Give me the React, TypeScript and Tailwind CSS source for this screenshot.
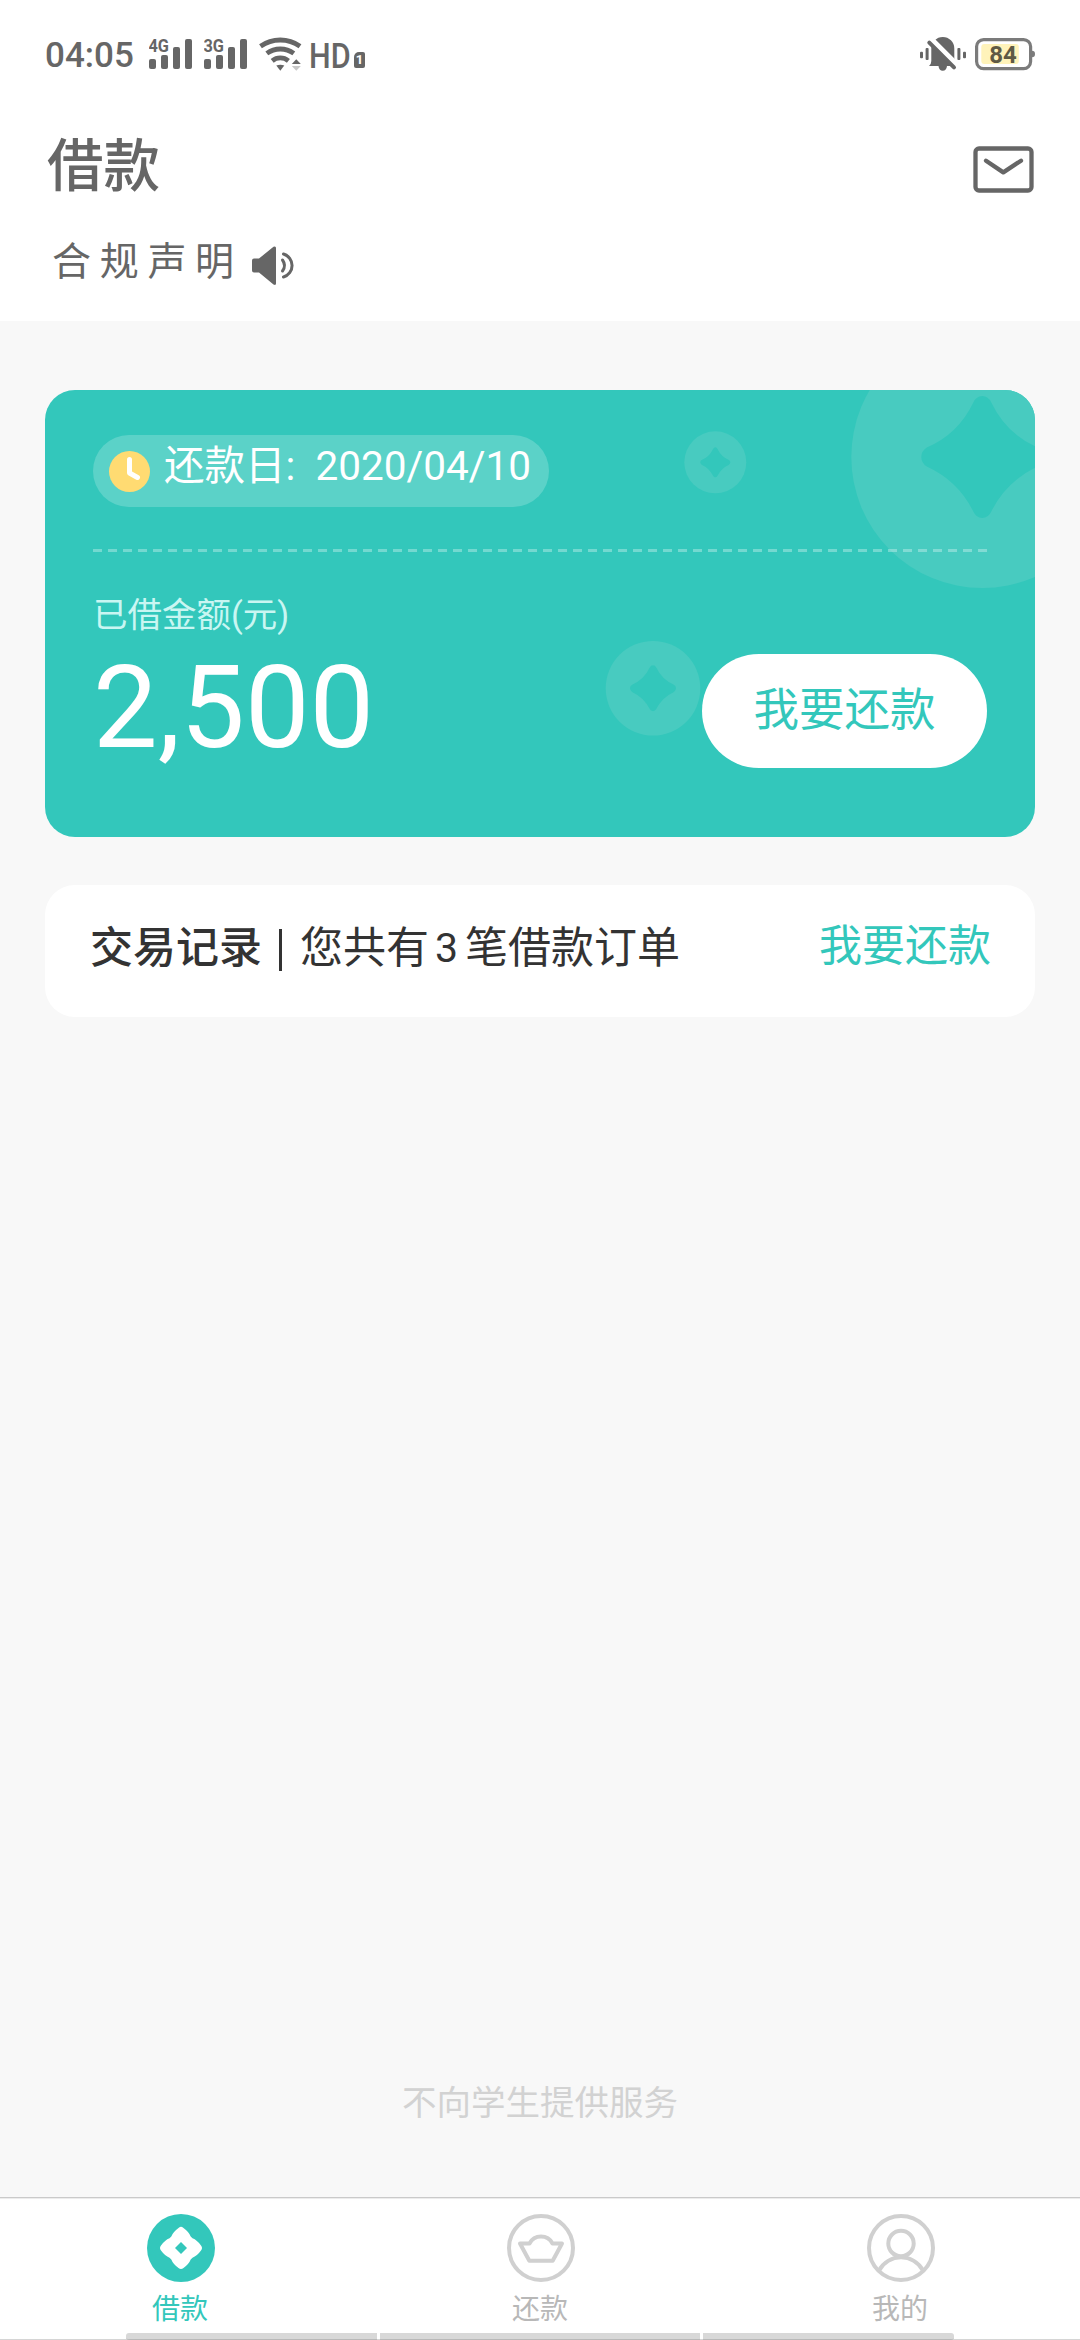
import type { ReactNode } from "react";

const STAR =
  "M0 -61 Q-6 -61 -9 -54.5 Q-24 -23 -55.5 -9.5 Q-61 -6 -61 0 Q-61 6 -55.5 9.5 Q-24 24 -9 54.5 Q-6 61 0 61 Q6 61 9 54.5 Q24 24 55.5 9.5 Q61 6 61 0 Q61 -6 55.5 -9.5 Q24 -23 9 -54.5 Q6 -61 0 -61 Z";

const coins = [
  { x: 937.3, y: 67, r: 131, star: 1 },
  { x: 670.3, y: 72.3, r: 31, star: 0.246 },
  { x: 608, y: 298.3, r: 47.3, star: 0.377 },
];

function Signal({ label }: { label: string }) {
  return (
    <svg width="43" height="40" viewBox="0 0 43 40" fill="#666">
      <text x="-0.5" y="15.5" fontSize="17.5" fontWeight="700" textLength="20.5" lengthAdjust="spacingAndGlyphs">
        {label}
      </text>
      <rect x="0" y="23" width="7" height="10" rx="2" />
      <rect x="12" y="19" width="7" height="14" rx="2" />
      <rect x="24" y="11" width="7" height="22" rx="2" />
      <rect x="36" y="3" width="7" height="30" rx="2" />
    </svg>
  );
}

function Wifi() {
  return (
    <svg width="43" height="40" viewBox="0 0 43 40" fill="none" stroke="#666" strokeWidth="4.8">
      <path d="M1.5 10.3 A34 34 0 0 1 41 10.3" />
      <path d="M7.8 17.4 A23 23 0 0 1 34.8 17.4" />
      <path d="M13.2 24.8 A13 13 0 0 1 29.4 24.8" />
      <path d="M17.3 29.6 Q21.3 28 25.3 29.6 L21.3 34.8 Z" fill="#666" stroke="none" />
      <path d="M37.3 23.2 L41.8 28 H32.8 Z" fill="#666" stroke="none" />
      <path d="M37.3 34.7 L41.8 30 H32.8 Z" fill="#c8c8c8" stroke="none" />
    </svg>
  );
}

function BellOff() {
  return (
    <svg width="46" height="40" viewBox="0 0 46 40" fill="#666">
      <rect x="0" y="15.7" width="3" height="6.6" rx="1" />
      <rect x="5.6" y="12" width="3" height="12" rx="1" />
      <rect x="37.4" y="12" width="3" height="12" rx="1" />
      <rect x="43" y="15.7" width="3" height="6.6" rx="1" />
      <path d="M9 30 Q11.3 28 11.3 25 V12.5 A11.5 11.5 0 0 1 34.3 12.5 V25 Q34.3 28 36.5 30 H27 Q26.5 34.7 22.7 34.7 Q19 34.7 18.5 30 Z" />
      <path d="M8 1 L37 30" stroke="#fff" strokeWidth="7" />
      <path d="M9.3 6.7 L34 31.4" stroke="#666" strokeWidth="4" strokeLinecap="round" />
    </svg>
  );
}

function Battery() {
  return (
    <svg width="60" height="40" viewBox="0 0 60 40">
      <rect x="1.6" y="3.6" width="54" height="29" rx="7" fill="none" stroke="#7b7b7b" strokeWidth="3.2" />
      <path d="M57 14.8 Q60 14.8 60 18 Q60 21.2 57 21.2 Z" fill="#7b7b7b" />
      <rect x="6.3" y="8" width="37.5" height="20" rx="3" fill="#fff3ba" />
      <text x="28" y="27" textAnchor="middle" fontSize="24" fontWeight="700" fill="#5f5a45">
        84
      </text>
    </svg>
  );
}

function StatusBar() {
  return (
    <div className="flex h-[136px] items-start justify-between px-[45px] pt-9">
      <div className="flex h-10 items-center">
        <span className="w-[104px] text-[35px] leading-10 font-medium">04:05</span>
        <div className="flex gap-3">
          <Signal label="4G" />
          <Signal label="3G" />
          <Wifi />
        </div>
        <span className="ml-[7px] w-[45px] origin-left scale-x-[0.86] text-[35.5px] leading-10 font-medium">HD</span>
        <span className="mt-[7px] flex h-4 w-[11px] items-center justify-center rounded-[2px] rounded-tl-[5px] bg-[#666] text-[13px] leading-4 font-bold text-white">
          1
        </span>
      </div>
      <div className="flex h-10 items-center gap-[9px]">
        <BellOff />
        <Battery />
      </div>
    </div>
  );
}

function Header() {
  return (
    <header className="h-[321px] bg-white text-[#666]">
      <StatusBar />
      <div className="flex h-[60px] items-center justify-between pr-[46px] pl-[47px]">
        <h1 className="mt-px text-[56.5px] leading-[60px] font-medium">借款</h1>
        <svg className="mt-1.5" width="61" height="47" viewBox="0 0 61 47" fill="none" stroke="#666" strokeWidth="4.3">
          <rect x="2.5" y="2.5" width="56" height="42" rx="3.5" />
          <path d="M13 14.7 L30.3 26.4 L48 14.7" strokeLinecap="round" strokeLinejoin="round" />
        </svg>
      </div>
      <div className="mt-[46px] flex h-10 items-center pl-[52px]">
        <span className="w-[200px] text-[39px] leading-10 tracking-[8.7px] whitespace-nowrap">合规声明</span>
        <svg className="mt-[7px]" width="44" height="40" viewBox="0 0 44 40" fill="#666">
          <path d="M2 12.5 H7 L21.5 0.8 Q24 -0.3 24 2 V37.5 Q24 39.8 21.5 38.5 L7 26.5 H2 Q0 26.5 0 24.5 V14.5 Q0 12.5 2 12.5 Z" />
          <g fill="none" stroke="#666" strokeWidth="3" strokeLinecap="round">
            <path d="M30.5 14 Q34.5 19.5 30.5 25" />
            <path d="M31.5 8 A12 12 0 0 1 31.5 31" />
          </g>
        </svg>
      </div>
    </header>
  );
}

function LoanCard() {
  return (
    <section className="relative h-[447px] overflow-hidden rounded-[30px] bg-[#33c7bb] px-12 pt-[45px] text-white">
      <svg className="absolute inset-0" width="990" height="447" viewBox="0 0 990 447">
        {coins.map((coin) => (
          <g key={coin.x} transform={`translate(${coin.x} ${coin.y})`}>
            <circle r={coin.r} fill="#48cbc0" />
            <path d={STAR} transform={`scale(${coin.star})`} fill="#33c7bb" />
          </g>
        ))}
      </svg>

      <div className="relative">
        <div className="flex h-[72px] w-[456px] items-center rounded-full bg-white/20 pl-4">
          <svg width="41" height="41" viewBox="0 0 41 41">
            <circle cx="20.5" cy="20.5" r="20.5" fill="#ffdb72" />
            <path d="M20.5 8.5 V22 L28.5 26.5" fill="none" stroke="#fff" strokeWidth="5" strokeLinecap="round" strokeLinejoin="round" />
          </svg>
          <span className="-mt-[11px] ml-[14px] text-[40.5px] leading-[48px] whitespace-pre">还款日:  2020/04/10</span>
        </div>

        <div className="mt-[42px] h-[3px] bg-[repeating-linear-gradient(90deg,#ffffff50_0_9px,transparent_9px_15px)]" />

        <div className="flex justify-between">
          <div className="pt-[45px]">
            <div className="text-[34.5px] leading-9 text-[#c9f6f2]">已借金额(元)</div>
            <div className="mt-[25px] text-[115px] leading-[100px]">2,500</div>
          </div>
          <button type="button" className="mt-[102px] h-[114px] w-[285px] rounded-full bg-white text-[45.5px] text-[#33c7bb]">
            我要还款
          </button>
        </div>
      </div>
    </section>
  );
}

function RecordCard() {
  return (
    <section className="mt-12 flex h-[132px] items-start justify-between rounded-[30px] bg-white pt-10 pr-11 pl-[45px] text-[43px] leading-[46px] text-[#333]">
      <div className="flex items-center">
        <span className="font-medium">交易记录</span>
        <span className="mt-1 ml-[17px] h-[42px] w-[3px] bg-[#333]" />
        <span className="ml-[18px]">您共有</span>
        <span className="mr-[7px] ml-1.5 text-[41px]">3</span>
        <span>笔借款订单</span>
      </div>
      <button type="button" className="-mt-0.5 text-[#33c7bb]">
        我要还款
      </button>
    </section>
  );
}

function Tab({ label, active, children }: { label: string; active?: boolean; children: ReactNode }) {
  return (
    <div className="flex flex-1 flex-col items-center pt-4">
      <svg className="ml-[1.5px]" width="68" height="68" viewBox="-34 -34 68 68" fill="none" stroke="#d0d0d0" strokeWidth="4">
        {children}
      </svg>
      <span className={`mt-3 text-[28px] leading-8 ${active ? "text-[#33c7bb]" : "text-[#b8b8b8]"}`}>{label}</span>
    </div>
  );
}

function TabBar() {
  return (
    <nav className="relative flex h-[143px] border-t border-[#cacaca] bg-white shadow-[inset_0_1px_0_#ececec]">
      <Tab label="借款" active>
        <g stroke="none">
          <circle r="34" fill="#33c7bb" />
          <path
            d="M0 -21.3 Q1 -21.3 2.5 -20 Q8 -16 9.7 -11.5 L11.5 -9.7 Q16 -8 20 -2.5 Q22 0 20 2.5 Q16 8 11.5 9.7 L9.7 11.5 Q8 16 2.5 20 Q0 22 -2.5 20 Q-8 16 -9.7 11.5 L-11.5 9.7 Q-16 8 -20 2.5 Q-22 0 -20 -2.5 Q-16 -8 -11.5 -9.7 L-9.7 -11.5 Q-8 -16 -2.5 -20 Q-1 -21.3 0 -21.3 Z"
            fill="#fff"
          />
          <path d="M0 -6 L6 0 L0 6 L-6 0 Z" fill="#33c7bb" />
        </g>
      </Tab>
      <Tab label="还款">
        <circle r="32" />
        <path d="M-11.5 -4.5 H-21 L-11.7 12.7 H11.7 L21 -4.5 H11.5 A13 13 0 0 0 -11.5 -4.5 Z" strokeLinejoin="round" />
      </Tab>
      <Tab label="我的">
        <circle r="32" />
        <circle cy="-4.5" r="12.7" />
        <path d="M-22 22.5 A25 25 0 0 1 22 22.5" />
      </Tab>

      {/* gesture hints */}
      <div className="absolute inset-x-0 bottom-0 flex h-[7px] justify-center gap-[3px] border-b border-[#d5d5d5]">
        <div className="-mb-px w-[251px] rounded-l-[3px] border-b border-[#b9b9b9] bg-[#d8d8d8]" />
        <div className="-mb-px w-[320px] border-b border-[#b9b9b9] bg-[#d8d8d8]" />
        <div className="-mb-px w-[251px] rounded-r-[3px] border-b border-[#b9b9b9] bg-[#d8d8d8]" />
      </div>
    </nav>
  );
}

export default function App() {
  return (
    <div className="flex h-[2340px] w-[1080px] flex-col overflow-hidden bg-[#f8f8f8] font-['Roboto','Noto_Sans_CJK_SC',sans-serif]">
      <Header />
      <main className="flex flex-1 flex-col px-[45px] pt-[69px]">
        <LoanCard />
        <RecordCard />
        <p className="mt-auto mb-[74px] text-center text-[34.5px] leading-10 text-[#d2d2d2]">不向学生提供服务</p>
      </main>
      <TabBar />
    </div>
  );
}
